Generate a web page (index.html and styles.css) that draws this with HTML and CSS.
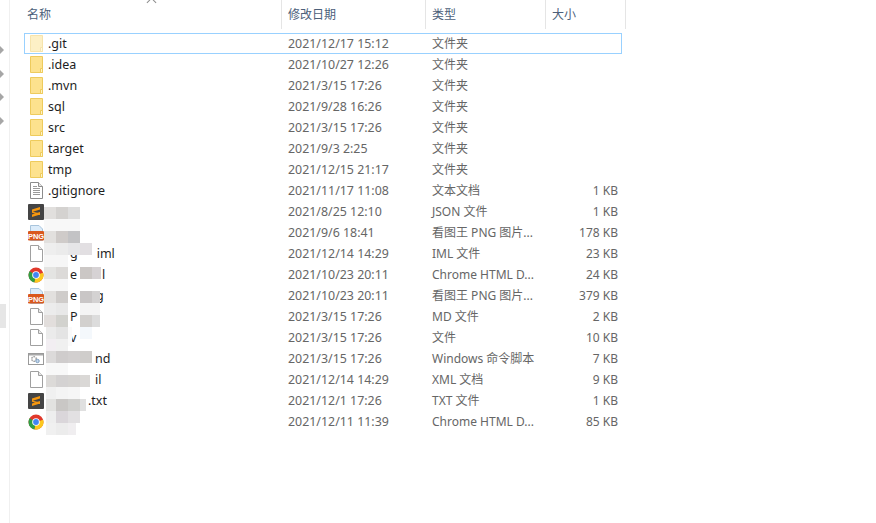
FILE: index.html
```html
<!DOCTYPE html>
<html lang="zh-CN">
<head>
    <meta charset="UTF-8">
    <title>文件列表</title>
    <link rel="stylesheet" href="styles.css">
</head>
<body>
    <svg class="defs" width="0" height="0">
        <symbol id="i-folder" viewBox="0 0 13 17">
            <path d="M.5 .5H12.5V16.500H.5Z" fill="#fde28e" stroke="#eecb5c"/>
            <path d="M10.500 16.500V12.500H12.500V16.500Z" fill="#fff3c4" stroke="#eecb5c"/>
        </symbol>
        <symbol id="i-doc" viewBox="0 0 13 17">
            <path d="M.5 .5H8.500L12.500 4.500V16.500H.5Z" fill="#fff" stroke="#a0a0a0"/>
            <path d="M8.500 .5V4.500H12.500" fill="#e8e8e8" stroke="#a0a0a0"/>
        </symbol>
        <symbol id="i-text" viewBox="0 0 13 17">
            <path d="M.5 .5H8.500L12.500 4.500V16.500H.5Z" fill="#fff" stroke="#8c8c8c"/>
            <path d="M8.500 .5V4.500H12.500" fill="#e8e8e8" stroke="#8c8c8c"/>
            <path d="M3 4.500H7M3 6.500H10M3 8.500H10M3 10.500H10M3 12.500H10" stroke="#9a9a9a" fill="none"/>
        </symbol>
        <symbol id="i-sublime" viewBox="0 0 16 16">
            <rect width="16" height="16" rx="1" fill="#444"/>
            <path d="M4 5.500L12 3V5.500L4 8ZM4 7.500L12 9.500V11L4 8.800ZM4 10.500L12 8V10.500L4 13Z" fill="#f6970f"/>
        </symbol>
        <symbol id="i-png" viewBox="0 0 16 16">
            <path d="M2.500 .5H11L14.500 4V15.500H2.500Z" fill="#dcecfa" stroke="#a8c4dc"/>
            <rect y="6" width="16" height="9.500" rx="1" fill="#d9581e"/>
            <text x="8" y="13.500" class="png-label">PNG</text>
        </symbol>
        <symbol id="i-chrome" viewBox="0 0 16 16">
            <circle cx="8" cy="8" r="7.500" fill="#e0392c"/>
            <path d="M8 8L1.500 4.300A7.500 7.500 0 0 0 6.500 15.400Z" fill="#2f9e44"/>
            <path d="M8 8L15.200 5.800A7.500 7.500 0 0 1 6.500 15.400Z" fill="#fcc81e"/>
            <circle cx="8" cy="8" r="3.800" fill="#fff"/>
            <circle cx="8" cy="8" r="2.900" fill="#4285f4"/>
        </symbol>
        <symbol id="i-cmd" viewBox="0 0 16 12">
            <rect x=".5" y=".5" width="15" height="11" fill="#fff" stroke="#9a9a9a"/>
            <rect x="1" y="1" width="14" height="1.500" fill="#a8a8a8"/>
            <circle cx="6" cy="6" r="2.300" fill="none" stroke="#a0a0a0" stroke-width="1.400" stroke-dasharray="1.500 .8"/>
            <circle cx="9.500" cy="8" r="1.700" fill="#c4d8ec" stroke="#7f9fc0"/>
        </symbol>
    </svg>

    <div class="window">
        <aside class="nav">
            <span class="arrow"></span>
            <span class="arrow"></span>
            <span class="arrow"></span>
            <span class="arrow"></span>
            <div class="nav-scroll"></div>
        </aside>

        <main class="list">
            <div class="sort-mark"></div>
            <header class="head">
                <div class="head-cell">名称</div>
                <div class="head-cell">修改日期</div>
                <div class="head-cell">类型</div>
                <div class="head-cell">大小</div>
            </header>

            <div class="row selected">
                <div class="name"><svg class="ico ico-page dim"><use href="#i-folder"/></svg>.git</div>
                <div class="date">2021/12/17 15:12</div><div class="type">文件夹</div><div class="size"></div>
            </div>
            <div class="row">
                <div class="name"><svg class="ico ico-page"><use href="#i-folder"/></svg>.idea</div>
                <div class="date">2021/10/27 12:26</div><div class="type">文件夹</div><div class="size"></div>
            </div>
            <div class="row">
                <div class="name"><svg class="ico ico-page"><use href="#i-folder"/></svg>.mvn</div>
                <div class="date">2021/3/15 17:26</div><div class="type">文件夹</div><div class="size"></div>
            </div>
            <div class="row">
                <div class="name"><svg class="ico ico-page"><use href="#i-folder"/></svg>sql</div>
                <div class="date">2021/9/28 16:26</div><div class="type">文件夹</div><div class="size"></div>
            </div>
            <div class="row">
                <div class="name"><svg class="ico ico-page"><use href="#i-folder"/></svg>src</div>
                <div class="date">2021/3/15 17:26</div><div class="type">文件夹</div><div class="size"></div>
            </div>
            <div class="row">
                <div class="name"><svg class="ico ico-page"><use href="#i-folder"/></svg>target</div>
                <div class="date">2021/9/3 2:25</div><div class="type">文件夹</div><div class="size"></div>
            </div>
            <div class="row">
                <div class="name"><svg class="ico ico-page"><use href="#i-folder"/></svg>tmp</div>
                <div class="date">2021/12/15 21:17</div><div class="type">文件夹</div><div class="size"></div>
            </div>
            <div class="row">
                <div class="name"><svg class="ico ico-page"><use href="#i-text"/></svg>.gitignore</div>
                <div class="date">2021/11/17 11:08</div><div class="type">文本文档</div><div class="size">1 KB</div>
            </div>
            <div class="row">
                <div class="name"><svg class="ico"><use href="#i-sublime"/></svg></div>
                <div class="date">2021/8/25 12:10</div><div class="type">JSON 文件</div><div class="size">1 KB</div>
            </div>
            <div class="row">
                <div class="name"><svg class="ico"><use href="#i-png"/></svg></div>
                <div class="date">2021/9/6 18:41</div><div class="type">看图王 PNG 图片...</div><div class="size">178 KB</div>
            </div>
            <div class="row">
                <div class="name"><svg class="ico ico-page"><use href="#i-doc"/></svg><span class="gap-22">g</span><span class="gap-19">iml</span></div>
                <div class="date">2021/12/14 14:29</div><div class="type">IML 文件</div><div class="size">23 KB</div>
            </div>
            <div class="row">
                <div class="name"><svg class="ico"><use href="#i-chrome"/></svg><span class="gap-22">e</span><span class="gap-25">l</span></div>
                <div class="date">2021/10/23 20:11</div><div class="type">Chrome HTML D...</div><div class="size">24 KB</div>
            </div>
            <div class="row">
                <div class="name"><svg class="ico"><use href="#i-png"/></svg><span class="gap-22">e</span><span class="gap-19">g</span></div>
                <div class="date">2021/10/23 20:11</div><div class="type">看图王 PNG 图片...</div><div class="size">379 KB</div>
            </div>
            <div class="row">
                <div class="name"><svg class="ico ico-page"><use href="#i-doc"/></svg><span class="gap-22">P</span></div>
                <div class="date">2021/3/15 17:26</div><div class="type">MD 文件</div><div class="size">2 KB</div>
            </div>
            <div class="row">
                <div class="name"><svg class="ico ico-page"><use href="#i-doc"/></svg><span class="gap-22">v</span></div>
                <div class="date">2021/3/15 17:26</div><div class="type">文件</div><div class="size">10 KB</div>
            </div>
            <div class="row">
                <div class="name"><svg class="ico ico-cmd"><use href="#i-cmd"/></svg><span class="gap-47">nd</span></div>
                <div class="date">2021/3/15 17:26</div><div class="type">Windows 命令脚本</div><div class="size">7 KB</div>
            </div>
            <div class="row">
                <div class="name"><svg class="ico ico-page"><use href="#i-doc"/></svg><span class="gap-47">il</span></div>
                <div class="date">2021/12/14 14:29</div><div class="type">XML 文档</div><div class="size">9 KB</div>
            </div>
            <div class="row">
                <div class="name"><svg class="ico"><use href="#i-sublime"/></svg><span class="gap-40">.txt</span></div>
                <div class="date">2021/12/1 17:26</div><div class="type">TXT 文件</div><div class="size">1 KB</div>
            </div>
            <div class="row">
                <div class="name"><svg class="ico"><use href="#i-chrome"/></svg></div>
                <div class="date">2021/12/11 11:39</div><div class="type">Chrome HTML D...</div><div class="size">85 KB</div>
            </div>

            <!-- mosaic that hides the file names -->
            <svg class="mosaic" width="60" height="245" viewBox="0 0 60 245" shape-rendering="crispEdges">
                <rect x="0" y="12" width="12" height="12" fill="#e1dfdd"/><rect x="12" y="12" width="12" height="12" fill="#d4d2d0"/><rect x="24" y="12" width="12" height="12" fill="#dedede"/>
                <rect x="0" y="24" width="36" height="12" fill="#f8f8f8"/>
                <rect x="0" y="36" width="12" height="12" fill="#e2e0de"/><rect x="12" y="36" width="12" height="12" fill="#cfcbc9"/><rect x="24" y="36" width="12" height="12" fill="#c3c3c5"/>
                <rect x="0" y="48" width="12" height="12" fill="#eeeeee"/><rect x="12" y="48" width="12" height="12" fill="#ebebeb"/><rect x="24" y="48" width="12" height="12" fill="#e6e6e8"/><rect x="36" y="48" width="12" height="12" fill="#e2dfe2"/>
                <rect x="0" y="60" width="24" height="12" fill="#f6f6f6"/>
                <rect x="0" y="72" width="12" height="12" fill="#e4e4e2"/><rect x="12" y="72" width="12" height="12" fill="#dcdad8"/><rect x="36" y="72" width="12" height="12" fill="#cbc7c5"/><rect x="48" y="72" width="9" height="12" fill="#d6d2d4"/>
                <rect x="0" y="84" width="24" height="12" fill="#f6f6f6"/>
                <rect x="0" y="96" width="12" height="12" fill="#e2e0de"/><rect x="12" y="96" width="12" height="12" fill="#cfccca"/><rect x="36" y="96" width="12" height="12" fill="#c9c6c6"/><rect x="48" y="96" width="8" height="12" fill="#d4d2d2"/>
                <rect x="0" y="108" width="12" height="12" fill="#ececec"/><rect x="12" y="108" width="12" height="12" fill="#e8e8e8"/><rect x="36" y="108" width="20" height="12" fill="#f4f4f4"/>
                <rect x="0" y="120" width="12" height="12" fill="#e2dedc"/><rect x="12" y="120" width="12" height="12" fill="#d2d2ce"/><rect x="36" y="120" width="12" height="12" fill="#d2d0ce"/><rect x="48" y="120" width="8" height="12" fill="#dcdcdc"/>
                <rect x="2" y="132" width="10" height="12" fill="#ebebeb"/><rect x="12" y="132" width="12" height="12" fill="#e4e4e4"/><rect x="24" y="132" width="4" height="19" fill="#fafafa"/><rect x="36" y="132" width="12" height="12" fill="#f4f8fc"/>
                <rect x="2" y="144" width="10" height="12" fill="#f2eef2"/><rect x="12" y="144" width="12" height="12" fill="#f0f0f0"/>
                <rect x="2" y="156" width="10" height="12" fill="#dcdada"/><rect x="12" y="156" width="12" height="12" fill="#cfcccc"/><rect x="24" y="156" width="12" height="12" fill="#d2cfcf"/><rect x="36" y="156" width="12" height="12" fill="#cfcdcb"/>
                <rect x="2" y="168" width="22" height="12" fill="#f8f8f8"/>
                <rect x="2" y="180" width="10" height="12" fill="#dcdad8"/><rect x="12" y="180" width="12" height="12" fill="#d4d2d2"/><rect x="24" y="180" width="12" height="12" fill="#d6d4d2"/><rect x="36" y="180" width="10" height="12" fill="#dad8d6"/>
                <rect x="2" y="192" width="10" height="12" fill="#f0f0f0"/><rect x="12" y="192" width="12" height="12" fill="#f4f4f4"/><rect x="24" y="192" width="12" height="12" fill="#f6f6f6"/>
                <rect x="2" y="204" width="10" height="12" fill="#e2e2e0"/><rect x="12" y="204" width="12" height="12" fill="#c9c7c5"/><rect x="24" y="204" width="12" height="12" fill="#d0d0ce"/><rect x="36" y="204" width="6" height="12" fill="#e0e0e0"/>
                <rect x="2" y="216" width="10" height="12" fill="#eeeeee"/><rect x="12" y="216" width="12" height="12" fill="#dad6da"/><rect x="24" y="216" width="12" height="12" fill="#e2e0e2"/>
                <rect x="2" y="228" width="10" height="12" fill="#f0f0f0"/><rect x="12" y="228" width="12" height="12" fill="#ececec"/><rect x="24" y="228" width="8" height="12" fill="#f0eef0"/>
            </svg>
        </main>
    </div>
</body>
</html>
```

FILE: styles.css
```css
* {
    box-sizing: border-box;
}

body {
    margin: 0;
    background-color: #fff;
    font-family: "Noto Sans", "Noto Sans CJK SC", sans-serif;
    font-size: 12px;
    overflow: hidden;
}

.defs {
    display: none;
}

.window {
    display: flex;
    height: 523px;
}

.nav {
    width: 10px;
    padding-top: 46px;
    border-right: 1px solid #f0f0f0;
    display: flex;
    flex-direction: column;
    flex: none;
}

.arrow {
    width: 0;
    height: 0;
    margin-bottom: 15.5px;
    border-left: 4px solid #a6a6a6;
    border-top: 4px solid transparent;
    border-bottom: 4px solid transparent;
}

.nav-scroll {
    width: 6px;
    height: 24px;
    margin-top: 164px;
    background-color: #e6e6e6;
}

.list {
    position: relative;
    flex: 1;
}

.sort-mark {
    position: absolute;
    left: 138px;
    top: 0;
    width: 7px;
    height: 7px;
    border-left: 1px solid #8c8c8c;
    border-top: 1px solid #8c8c8c;
    transform: translateY(-1px) rotate(45deg);
}

.head {
    display: grid;
    grid-template-columns: 272px 144px 120px 80px;
    height: 26px;
    margin-bottom: 7px;
    color: #4c607a;
}

.head-cell {
    padding-left: 6px;
    line-height: 29px;
    border-right: 1px solid #e5e5e5;
}

.head-cell:first-child {
    padding-left: 17px;
}

.row {
    display: grid;
    grid-template-columns: 264px 144px 120px 70px;
    width: 598px;
    height: 21px;
    margin-left: 14px;
    line-height: 21px;
    color: #666;
}

.row.selected {
    outline: 1px solid #99d1ff;
    outline-offset: -1px;
}

.name {
    display: flex;
    align-items: center;
    color: #1e1e1e;
    padding-left: 4px;
    font-size: 12.5px;
}

.date {
    font-size: 12.4px;
}

.size {
    text-align: right;
    padding-right: 4px;
}

.ico {
    width: 16px;
    height: 16px;
    margin-right: 4px;
    flex: none;
}

.ico-page {
    width: 13px;
    height: 17px;
    margin-left: 2px;
    margin-right: 5px;
}

.ico-cmd {
    height: 12px;
}

.dim {
    opacity: .5;
}

.png-label {
    fill: #fff;
    font-family: "Liberation Sans", sans-serif;
    font-size: 7.5px;
    font-weight: bold;
    text-anchor: middle;
}

.gap-19 { margin-left: 19px; }
.gap-22 { margin-left: 22px; }
.gap-25 { margin-left: 25px; }
.gap-40 { margin-left: 40px; }
.gap-47 { margin-left: 47px; }

.mosaic {
    position: absolute;
    left: 34px;
    top: 195px;
}
```
